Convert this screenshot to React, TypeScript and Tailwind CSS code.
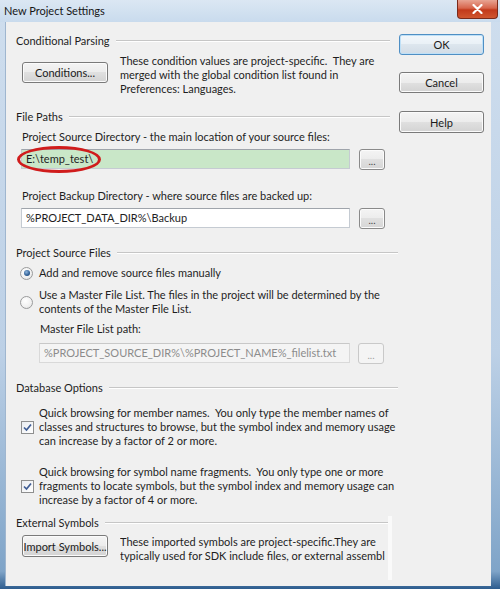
import React from "react";

function Btn({
  children,
  className = "",
  isDefault = false,
}: {
  children: React.ReactNode;
  className?: string;
  isDefault?: boolean;
}) {
  return (
    <div
      className={`flex items-center justify-center rounded-[3px] border text-[11px] leading-none text-[#1b1b1b] ${
        isDefault
          ? "border-[#4f8fc4] bg-[linear-gradient(to_bottom,#f2f7fb_0%,#e9f0f6_50%,#dde6ee_50%,#d2dce6_100%)] shadow-[inset_0_0_0_1px_#bfe0f7]"
          : "border-[#7a7a7a] bg-[linear-gradient(to_bottom,#f4f4f4_0%,#ececec_50%,#e0e0e0_50%,#d3d3d3_100%)] shadow-[inset_0_0_0_1px_#fbfbfb]"
      } ${className}`}
    >
      {children}
    </div>
  );
}

function DotsBtn({ disabled = false }: { disabled?: boolean }) {
  return (
    <div
      className={`flex h-[21px] w-[26px] items-center justify-center rounded-[3px] border pt-[2px] text-[10px] leading-none ${
        disabled
          ? "border-[#c9c9c9] bg-[#f4f4f4] text-[#a0a0a0]"
          : "border-[#8a8a8a] bg-[linear-gradient(to_bottom,#f4f4f4_0%,#ececec_50%,#e0e0e0_50%,#d6d6d6_100%)] text-[#444] shadow-[inset_0_0_0_1px_#fbfbfb]"
      }`}
    >
      ...
    </div>
  );
}

function Header({ label, end }: { label: string; end: string }) {
  return (
    <div className={`flex h-[14px] items-center ${end}`}>
      <span className="whitespace-nowrap text-[#1e1e1e]">{label}</span>
      <div className="ml-[6px] h-[2px] flex-1 border-t border-b border-t-[#c6c6c6] border-b-white" />
    </div>
  );
}

function Input({
  children,
  className = "",
}: {
  children: React.ReactNode;
  className?: string;
}) {
  return (
    <div
      className={`flex h-[20px] items-center border border-[#c5cbd2] border-t-[#9fa4ab] px-[4px] whitespace-nowrap overflow-hidden ${className}`}
    >
      {children}
    </div>
  );
}

function Radio({ checked }: { checked: boolean }) {
  return (
    <div className="flex h-[13px] w-[13px] shrink-0 items-center justify-center rounded-full border border-[#9a9b9c] bg-[radial-gradient(circle_at_40%_35%,#ffffff_0%,#f0f0f0_60%,#d8d8d8_100%)]">
      {checked && (
        <div className="h-[6px] w-[6px] rounded-full bg-[radial-gradient(circle_at_40%_35%,#8fb5dd_0%,#2f5f95_60%,#1e3f6b_100%)]" />
      )}
    </div>
  );
}

function Check() {
  return (
    <div className="flex h-[13px] w-[13px] shrink-0 items-center justify-center border border-[#8e8f8f] bg-[linear-gradient(135deg,#e9ecf0_0%,#ffffff_100%)]">
      <svg width="9" height="9" viewBox="0 0 9 9">
        <path
          d="M1 4.5 L3.5 7 L8 1.5"
          fill="none"
          stroke="#3f5d94"
          strokeWidth="1.7"
        />
      </svg>
    </div>
  );
}

export default function App() {
  return (
    <div className="relative h-[589px] w-[500px] overflow-hidden bg-[linear-gradient(to_bottom,#cfdeee_0%,#bcd0e6_60%,#7fa4c8_97%,#2d5c8e_100%)] font-['Lato',sans-serif] text-[11px] text-[#1e1e1e] whitespace-nowrap">
      {/* Title bar */}
      <div className="flex h-[22px] items-center justify-between bg-[linear-gradient(to_bottom,#dbe7f3_0%,#c9dbed_100%)]">
        <span className="pl-[4px] text-[11px] text-[#161616]">
          New Project Settings
        </span>
        <div className="mr-[2px] flex h-[19px] w-[41px] items-center justify-center self-start rounded-b-[4px] border border-t-0 border-[#7a2a1a] bg-[linear-gradient(to_bottom,#e8a493_0%,#d7654c_45%,#c2391b_55%,#d0562f_100%)]">
          <svg width="11" height="10" viewBox="0 0 11 10">
            <path
              d="M1.5 1 L9.5 9 M9.5 1 L1.5 9"
              stroke="#ffffff"
              strokeWidth="2.2"
              strokeLinecap="round"
            />
          </svg>
        </div>
      </div>

      {/* Client */}
      <div className="ml-[5px] flex h-[564px] w-[486px] border-l border-[#9fb6cf] bg-[#f0f0f0]">
        {/* Left column */}
        <div className="flex w-[391px] flex-col pl-[10px]">
          <div className="mt-[12px]">
            <Header label="Conditional Parsing" end="mr-[7px]" />
          </div>
          <div className="mt-[6px] flex items-start pl-[6px]">
            <Btn className="mt-[8px] h-[21px] w-[86px]">Conditions...</Btn>
            <div className="ml-[12px] leading-[14px]">
              <div>These condition values are project-specific.&nbsp; They are</div>
              <div>merged with the global condition list found in</div>
              <div>Preferences: Languages.</div>
            </div>
          </div>

          <div className="mt-[14px]">
            <Header label="File Paths" end="mr-[7px]" />
          </div>
          <div className="mt-[6px] h-[14px] pl-[6px] leading-[14px]">
            Project Source Directory - the main location of your source files:
          </div>
          <div className="relative mt-[5px] flex items-start pl-[5px]">
            <Input className="w-[329px] bg-[#c9e7c8]">E:\temp_test\</Input>
            <div className="ml-[9px]">
              <DotsBtn />
            </div>
            <div className="absolute left-[1px] top-[-3px] h-[27px] w-[84px] rounded-[50%] border-[3px] border-[#d01c1c]" />
          </div>
          <div className="mt-[19px] h-[14px] pl-[6px] leading-[14px]">
            Project Backup Directory - where source files are backed up:
          </div>
          <div className="mt-[5px] flex items-start pl-[5px]">
            <Input className="w-[329px] bg-white">%PROJECT_DATA_DIR%\Backup</Input>
            <div className="ml-[9px]">
              <DotsBtn />
            </div>
          </div>

          <div className="mt-[17px]">
            <Header label="Project Source Files" end="mr-[-1px]" />
          </div>
          <div className="mt-[6px] flex h-[14px] items-center pl-[4px]">
            <Radio checked />
            <span className="ml-[6px] leading-[14px]">
              Add and remove source files manually
            </span>
          </div>
          <div className="mt-[8px] flex items-center pl-[4px]">
            <Radio checked={false} />
            <div className="ml-[6px] leading-[14px]">
              <div>
                Use a Master File List. The files in the project will be determined by the
              </div>
              <div>contents of the Master File List.</div>
            </div>
          </div>
          <div className="mt-[6px] h-[14px] pl-[24px] leading-[14px]">
            Master File List path:
          </div>
          <div className="mt-[7px] flex items-start pl-[23px]">
            <Input className="w-[311px] border-[#d9d9d9] border-t-[#c8c8c8] bg-[#f4f4f4] text-[#8c8c8c]">
              %PROJECT_SOURCE_DIR%\%PROJECT_NAME%_filelist.txt
            </Input>
            <div className="ml-[8px]">
              <DotsBtn disabled />
            </div>
          </div>

          <div className="mt-[17px]">
            <Header label="Database Options" end="mr-[-1px]" />
          </div>
          <div className="mt-[11px] flex items-center pl-[5px]">
            <Check />
            <div className="ml-[5px] leading-[14px]">
              <div>
                Quick browsing for member names.&nbsp; You only type the member names of
              </div>
              <div>
                classes and structures to browse, but the symbol index and memory usage
              </div>
              <div>can increase by a factor of 2 or more.</div>
            </div>
          </div>
          <div className="mt-[17px] flex items-center pl-[5px]">
            <Check />
            <div className="ml-[5px] leading-[14px]">
              <div>
                Quick browsing for symbol name fragments.&nbsp; You only type one or more
              </div>
              <div>
                fragments to locate symbols, but the symbol index and memory usage can
              </div>
              <div>increase by a factor of 4 or more.</div>
            </div>
          </div>

          <div className="mt-[9px]">
            <Header label="External Symbols" end="mr-[7px]" />
          </div>
          <div className="mt-[5px] flex items-start pl-[6px]">
            <Btn className="h-[22px] w-[86px]">Import Symbols...</Btn>
            <div className="ml-[12px] w-[265px] overflow-hidden leading-[14px]">
              <div>These imported symbols are project-specific.They are</div>
              <div>typically used for SDK include files, or external assembl</div>
            </div>
            <div className="ml-[3px] mt-[-19px] h-[64px] w-[4px] bg-[#fafafa]" />
          </div>
        </div>

        {/* Right column */}
        <div className="flex flex-col pl-[2px] pt-[12px]">
          <Btn isDefault className="h-[21px] w-[85px]">
            OK
          </Btn>
          <Btn className="mt-[17px] h-[21px] w-[85px]">Cancel</Btn>
          <Btn className="mt-[18px] h-[22px] w-[85px]">Help</Btn>
        </div>
      </div>
    </div>
  );
}
